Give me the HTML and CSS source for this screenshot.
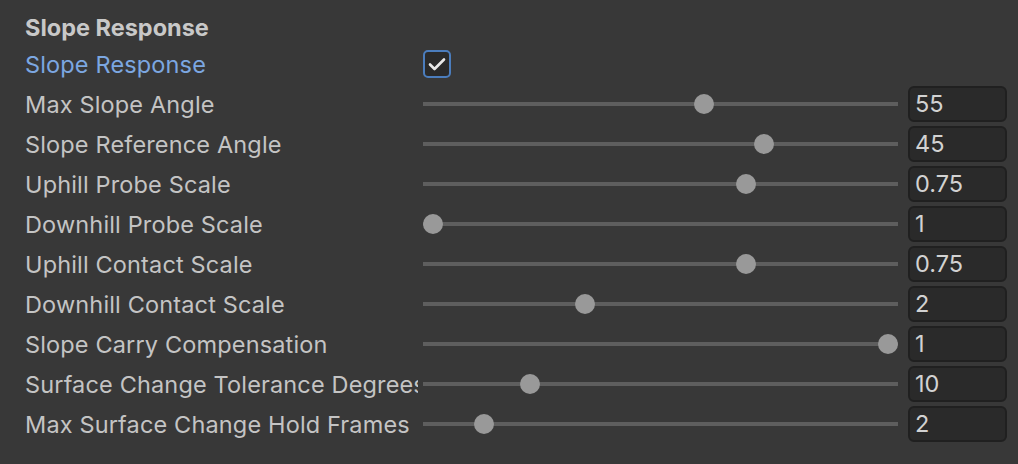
FILE: index.html
```html
<!DOCTYPE html>
<html>
<head>
<meta charset="utf-8">
<link rel="stylesheet" href="styles.css">
</head>
<body>
<div class="panel">
  <div class="header">Slope Response</div>
  <div class="row">
    <div class="label label-active">Slope Response</div>
    <div class="field">
      <div class="checkbox">
        <svg width="18" height="14" viewBox="0 0 18 14"><path d="M2 7.5 L6.5 12 L16 2.5" fill="none" stroke="#e8e8e8" stroke-width="2.6" stroke-linecap="round" stroke-linejoin="round"/></svg>
      </div>
    </div>
  </div>
  <div class="row">
    <div class="label">Max Slope Angle</div>
    <div class="field"><div class="slider"><div class="track"></div><div class="thumb" style="left: calc((100% - 20px) * 0.596)"></div></div><div class="num">55</div></div>
  </div>
  <div class="row">
    <div class="label">Slope Reference Angle</div>
    <div class="field"><div class="slider"><div class="track"></div><div class="thumb" style="left: calc((100% - 20px) * 0.727)"></div></div><div class="num">45</div></div>
  </div>
  <div class="row">
    <div class="label">Uphill Probe Scale</div>
    <div class="field"><div class="slider"><div class="track"></div><div class="thumb" style="left: calc((100% - 20px) * 0.688)"></div></div><div class="num">0.75</div></div>
  </div>
  <div class="row">
    <div class="label">Downhill Probe Scale</div>
    <div class="field"><div class="slider"><div class="track"></div><div class="thumb" style="left: calc((100% - 20px) * 0)"></div></div><div class="num">1</div></div>
  </div>
  <div class="row">
    <div class="label">Uphill Contact Scale</div>
    <div class="field"><div class="slider"><div class="track"></div><div class="thumb" style="left: calc((100% - 20px) * 0.688)"></div></div><div class="num">0.75</div></div>
  </div>
  <div class="row">
    <div class="label">Downhill Contact Scale</div>
    <div class="field"><div class="slider"><div class="track"></div><div class="thumb" style="left: calc((100% - 20px) * 0.334)"></div></div><div class="num">2</div></div>
  </div>
  <div class="row">
    <div class="label">Slope Carry Compensation</div>
    <div class="field"><div class="slider"><div class="track"></div><div class="thumb" style="left: calc((100% - 20px) * 1)"></div></div><div class="num">1</div></div>
  </div>
  <div class="row">
    <div class="label">Surface Change Tolerance Degrees</div>
    <div class="field"><div class="slider"><div class="track"></div><div class="thumb" style="left: calc((100% - 20px) * 0.213)"></div></div><div class="num">10</div></div>
  </div>
  <div class="row">
    <div class="label">Max Surface Change Hold Frames</div>
    <div class="field"><div class="slider"><div class="track"></div><div class="thumb" style="left: calc((100% - 20px) * 0.112)"></div></div><div class="num">2</div></div>
  </div>
</div>
</body>
</html>
```

FILE: styles.css
```css
html, body {
  margin: 0;
  padding: 0;
  background: #383838;
}
body {
  width: 1018px;
  height: 464px;
  overflow: hidden;
  font-family: Inter, "Noto Sans", sans-serif;
  font-size: 23.5px;
  letter-spacing: 0.15px;
  color: #c4c4c4;
}
.panel {
  padding: 12px 11px 0 25px;
  display: flex;
  flex-direction: column;
}
.header {
  height: 32px;
  line-height: 32px;
  font-weight: 700;
  letter-spacing: 0;
  color: #c8c8c8;
}
.row {
  height: 40px;
  display: flex;
  align-items: center;
}
.label {
  width: 393px;
  flex: none;
  white-space: nowrap;
  overflow: hidden;
  margin-right: 5px;
}
.label-active {
  color: #7ca7e1;
}
.field {
  flex: 1;
  display: flex;
  align-items: center;
  gap: 10px;
  height: 100%;
}
.checkbox {
  width: 24px;
  height: 24px;
  border: 2px solid #4b7dbd;
  border-radius: 5px;
  background: #2a2a2a;
  display: flex;
  align-items: center;
  justify-content: center;
}
.slider {
  flex: 1;
  position: relative;
  height: 20px;
  display: flex;
  align-items: center;
}
.track {
  flex: 1;
  height: 4px;
  background: #5e5e5e;
}
.thumb {
  position: absolute;
  top: 0;
  width: 20px;
  height: 20px;
  border-radius: 50%;
  background: #999999;
}
.num {
  width: 95px;
  height: 32px;
  box-sizing: content-box;
  border: 2px solid #202020;
  border-radius: 6px;
  background: #2a2a2a;
  color: #d2d2d2;
  line-height: 32px;
  text-indent: 5px;
  letter-spacing: 0;
  flex: none;
}
```
